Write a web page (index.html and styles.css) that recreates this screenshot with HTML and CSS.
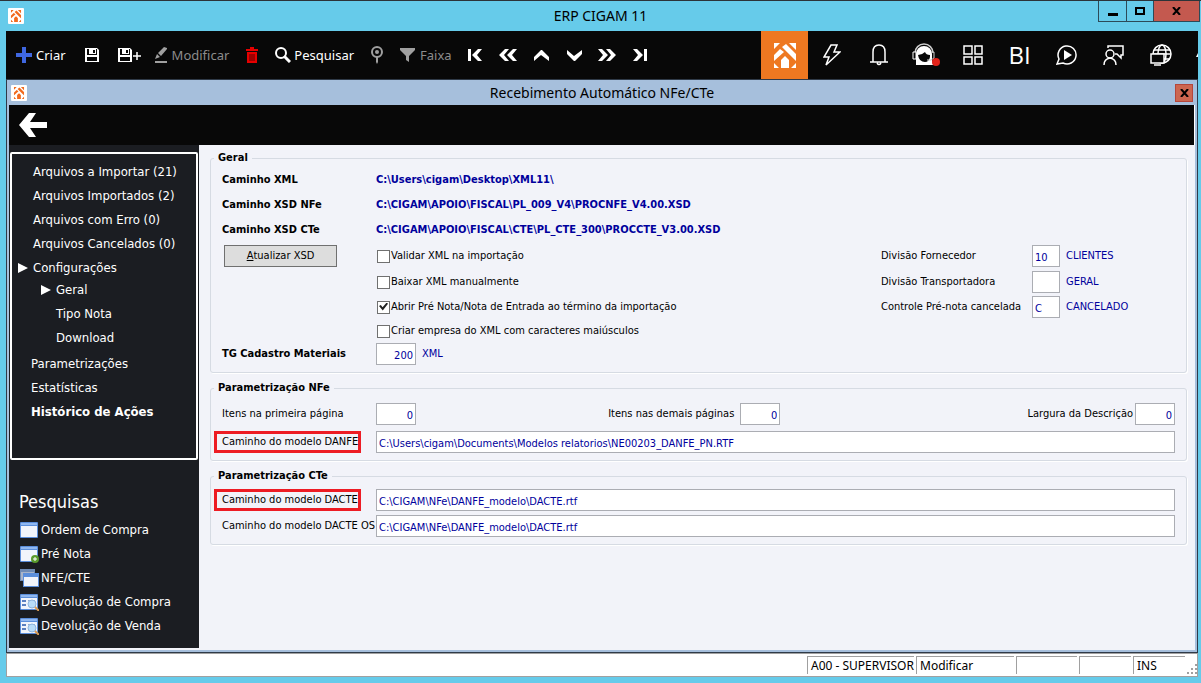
FILE: index.html
```html
<!DOCTYPE html>
<html lang="pt-BR">

<head>
    <meta charset="UTF-8">
    <title>ERP CIGAM 11</title>
    <link rel="stylesheet" href="styles.css">
</head>

<body>
    <svg class="symbols" aria-hidden="true">
        <symbol id="logo" viewBox="0 0 22 25">
            <path d="M0 0h6L0 6zM15 0h7v7zM0 12l6-6 4 3L0 18zM8 4l4-3 10 10v7zM7 25v-8l4-4 4 4v8zM0 25v-5l5 5zM22 25v-5l-5 5z" />
        </symbol>
        <symbol id="disk" viewBox="0 0 14 14">
            <path d="M0 0h12l2 2v12H0z" fill="#fff" />
            <path d="M2 1h2v5h7V1h1v6H2zM2 9h10v4H2zM8 2h2v3H8z" fill="#080808" />
        </symbol>
        <symbol id="window" viewBox="0 0 19 18">
            <rect x="0" y="1" width="18" height="16" rx="1" fill="#5b8edb" />
            <path d="M1 2h16v2H1z" fill="#8fb7f0" />
            <path d="M1 5h16v11H1z" fill="#f1f4fb" />
        </symbol>
        <symbol id="search-window" viewBox="0 0 19 18">
            <use href="#window" width="19" height="18" />
            <path d="M2 7h4v2H2zM2 11h4v2H2z" fill="#5b7fc0" />
            <path d="M8 7h7v1H8z" fill="#8fa8cc" />
            <circle cx="12" cy="11" r="4" fill="#b9dcf8" stroke="#8fb4de" />
            <path d="M15 14l4 4" stroke="#d79a55" stroke-width="2" />
        </symbol>
    </svg>

    <header class="title-bar">
        <svg class="app-icon" viewBox="-6 -4 34 33"><use href="#logo" width="22" height="25" /></svg>
        <h1>ERP CIGAM 11</h1>
        <div class="window-buttons">
            <button type="button" aria-label="Minimizar"><svg width="10" height="10" viewBox="0 0 10 10"><path d="M0 7h10v3H0z" /></svg></button>
            <button type="button" aria-label="Maximizar"><svg width="10" height="8" viewBox="0 0 10 8"><path d="M1 1h8v6H1z" fill="none" stroke="#000" stroke-width="2" /></svg></button>
            <button type="button" class="close" aria-label="Fechar"><svg width="9" height="8" viewBox="0 0 9 8"><path d="M1 0l7 8M8 0L1 8" stroke="#000" stroke-width="2" /></svg></button>
        </div>
    </header>

    <div class="frame">
        <nav class="toolbar">
            <div class="tools">
                <button type="button"><svg width="16" height="16" viewBox="0 0 16 16"><path d="M6 0h4v6h6v4h-6v6H6v-6H0V6h6z" fill="#3f67e0" /></svg>Criar</button>
                <button type="button" class="wide-icon" aria-label="Salvar"><svg width="14" height="14"><use href="#disk" /></svg></button>
                <button type="button" aria-label="Salvar e criar"><svg width="24" height="14" viewBox="0 0 24 14"><use href="#disk" width="14" height="14" /><path d="M19 4v8M15 8h8" stroke="#fff" stroke-width="1.5" /></svg></button>
                <button type="button" class="off"><svg width="14" height="16" viewBox="0 0 14 16"><path d="M1 14h12v2H1zM1 12l2-5 3 3zM4 6l6-6 3 1v1L7 9z" /></svg>Modificar</button>
                <button type="button" class="single-icon" aria-label="Excluir"><svg width="12" height="16" viewBox="0 0 12 16"><path d="M0 2h4V0h4v2h4v2H0zM1 5h10v11H1z" fill="#e60000" /><path d="M4 7v7M6 7v7M8 7v7" stroke="#500" /></svg></button>
                <button type="button" class="search"><svg width="16" height="16" viewBox="0 0 16 16"><circle cx="6" cy="6" r="5" fill="none" stroke="#fff" stroke-width="2" /><path d="M9 9l6 6" stroke="#fff" stroke-width="3" /></svg>Pesquisar</button>
                <button type="button" class="single-icon off" aria-label="Localizar"><svg width="12" height="18" viewBox="0 0 12 18"><circle cx="6" cy="6" r="5" fill="none" stroke="#a0a0a0" stroke-width="2" /><circle cx="6" cy="6" r="2" /><path d="M5 11h2v5l-1 2-1-2z" /></svg></button>
                <button type="button" class="off"><svg width="16" height="14" viewBox="0 0 16 14"><path d="M0 0h15v2L9 8v6l-3-2V8L0 2z" /></svg>Faixa</button>
            </div>
            <div class="record-nav">
                <button type="button" aria-label="Primeiro"><svg width="14" height="12" viewBox="0 0 14 12"><path d="M0 0h3v12H0zM10 0h4L9 6l5 6h-4L4 6z" /></svg></button>
                <button type="button" aria-label="Página anterior"><svg width="18" height="12" viewBox="0 0 18 12"><path d="M6 0h4L5 6l5 6H6L0 6zM14 0h4l-5 6 5 6h-4L8 6z" /></svg></button>
                <button type="button" aria-label="Anterior"><svg width="15" height="11" viewBox="0 0 15 11"><path d="M0 7l7-7h1l7 7v4L7 5l-7 6z" /></svg></button>
                <button type="button" aria-label="Próximo"><svg width="15" height="11" viewBox="0 0 15 11"><path d="M0 4l7 7h1l7-7V0L7 6 0 0z" /></svg></button>
                <button type="button" aria-label="Próxima página"><svg width="18" height="12" viewBox="0 0 18 12"><path d="M0 0h4l6 6-6 6H0l5-6zM8 0h4l6 6-6 6H8l5-6z" /></svg></button>
                <button type="button" aria-label="Último"><svg width="14" height="12" viewBox="0 0 14 12"><path d="M11 0h3v12h-3zM0 0h4l6 6-6 6H0l5-6z" /></svg></button>
            </div>
            <div class="modules">
                <button type="button" class="home" aria-label="CIGAM"><svg width="22" height="25"><use href="#logo" /></svg></button>
                <button type="button" aria-label="Atalhos"><svg class="line" width="18" height="22" viewBox="0 0 18 22"><path d="M8 1h6l-3 7h6L3 21l3-8H1z" /></svg></button>
                <button type="button" aria-label="Avisos"><svg class="line" width="18" height="22" viewBox="0 0 18 22"><path d="M3 18V8q0-7 6-7t6 7v10M0 18h18M7 19q2 3 4 0" /></svg></button>
                <button type="button" aria-label="Atendimento"><svg width="28" height="24" viewBox="0 0 28 24"><path d="M3 10a9 9 0 0 1 18 0" fill="none" stroke="#ccc" stroke-width="1.5" /><path d="M4 11a8 8 0 0 1 16 0v6l1 5H4z" /><path d="M6 12q4 0 7-3 1 3 5 3v2q-1 5-5 5-6 0-7-7z" fill="#080808" /><path d="M1 9h3v7H1z" fill="#080808" stroke="#fff" /><path d="M21 9h1v6l-3 2h-4" fill="none" stroke="#ccc" /><circle cx="24" cy="19" r="4" fill="#e2231a" /></svg></button>
                <button type="button" aria-label="Painéis"><svg class="line" width="20" height="20" viewBox="0 0 20 20"><path d="M1 1h8v8H1zM12 1h7v8h-7zM1 12h8v7H1zM12 12h7v7h-7z" /></svg></button>
                <button type="button" class="bi">BI</button>
                <button type="button" aria-label="Vídeos"><svg class="line" width="22" height="22" viewBox="0 0 22 22"><path d="M1 20l2-5a9 9 0 1 1 4 4z" /><path d="M8 6l8 5-8 5z" fill="#fff" stroke="none" /></svg></button>
                <button type="button" aria-label="Comunidade"><svg class="line" width="21" height="21" viewBox="0 0 21 21"><circle cx="7" cy="9" r="4" /><path d="M1 20q0-6 6-7 6 1 6 7M5 3V1h15v9h-2v3l-4-4h-2" /></svg></button>
                <button type="button" aria-label="Acesso remoto"><svg class="line" width="22" height="22" viewBox="0 0 22 22"><circle cx="12" cy="10" r="9" /><ellipse cx="12" cy="10" rx="4" ry="9" /><path d="M4 6h16M3 10h18M5 15h15" /><path d="M1 10h13v9H1z" fill="#080808" /><path d="M4 21h7" /></svg></button>
                <button type="button" class="more" aria-label="Mais"><svg width="2" height="4" viewBox="0 0 2 4"><path d="M2 0v4H0z" /></svg></button>
            </div>
        </nav>

        <section class="child-window">
            <div class="child-title">
                <svg class="app-icon" viewBox="-6 -4 34 33"><use href="#logo" width="22" height="25" /></svg>
                <h2>Recebimento Automático NFe/CTe</h2>
                <button type="button" class="child-close" aria-label="Fechar"><svg width="9" height="8" viewBox="0 0 9 8"><path d="M1 0l7 8M8 0L1 8" stroke="#000" stroke-width="2" /></svg></button>
            </div>
            <div class="back-bar">
                <button type="button" aria-label="Voltar"><svg width="28" height="24" viewBox="0 0 28 24"><path d="M10 0h7L11 9h17v6H11l6 9h-7L0 12z" fill="#fff" /></svg></button>
            </div>
            <div class="workspace">
                <aside class="sidebar">
                    <ul class="menu">
                        <li><a href="#">Arquivos a Importar (21)</a></li>
                        <li><a href="#">Arquivos Importados (2)</a></li>
                        <li><a href="#">Arquivos com Erro (0)</a></li>
                        <li><a href="#">Arquivos Cancelados (0)</a></li>
                        <li>
                            <a href="#" class="open">Configurações</a>
                            <ul class="submenu">
                                <li><a href="#" class="open">Geral</a></li>
                                <li><a href="#">Tipo Nota</a></li>
                                <li><a href="#">Download</a></li>
                            </ul>
                        </li>
                        <li><a href="#">Parametrizações</a></li>
                        <li><a href="#">Estatísticas</a></li>
                        <li><a href="#" class="current">Histórico de Ações</a></li>
                    </ul>
                    <h3>Pesquisas</h3>
                    <ul class="searches">
                        <li><a href="#"><svg width="19" height="18"><use href="#window" /></svg>Ordem de Compra</a></li>
                        <li><a href="#"><svg width="19" height="18" viewBox="0 0 19 18"><use href="#window" width="19" height="18" /><circle cx="15" cy="14" r="4" fill="#5a9a2c" /><path d="M15 12v4M13 14h4" stroke="#fff" /></svg>Pré Nota</a></li>
                        <li><a href="#"><svg width="19" height="18" viewBox="0 0 19 18"><path d="M0 0h15v12H0z" fill="#6f8bb5" /><path d="M1 3h13v8H1z" fill="#a9b4c8" /><path d="M3 4h16v14H3z" fill="#5b8edb" /><path d="M4 8h14v9H4z" fill="#f1f4fb" /></svg>NFE/CTE</a></li>
                        <li><a href="#"><svg width="19" height="18"><use href="#search-window" /></svg>Devolução de Compra</a></li>
                        <li><a href="#"><svg width="19" height="18"><use href="#search-window" /></svg>Devolução de Venda</a></li>
                    </ul>
                </aside>

                <form class="settings">
                    <fieldset>
                        <legend>Geral</legend>
                        <div class="general">
                            <strong>Caminho XML</strong>
                            <strong class="value path">C:\Users\cigam\Desktop\XML11\</strong>
                            <strong>Caminho XSD NFe</strong>
                            <strong class="value path">C:\CIGAM\APOIO\FISCAL\PL_009_V4\PROCNFE_V4.00.XSD</strong>
                            <strong>Caminho XSD CTe</strong>
                            <strong class="value path">C:\CIGAM\APOIO\FISCAL\CTE\PL_CTE_300\PROCCTE_V3.00.XSD</strong>

                            <button type="button" class="update"><u>A</u>tualizar XSD</button>
                            <label class="check"><input type="checkbox">Validar XML na importação</label>
                            <label for="fornecedor">Divisão Fornecedor</label>
                            <div class="code"><input type="text" id="fornecedor" value="10"><span class="value">CLIENTES</span></div>

                            <label class="check"><input type="checkbox">Baixar XML manualmente</label>
                            <label for="transportadora">Divisão Transportadora</label>
                            <div class="code"><input type="text" id="transportadora"><span class="value">GERAL</span></div>

                            <label class="check"><input type="checkbox" checked>Abrir Pré Nota/Nota de Entrada ao término da importação</label>
                            <label for="controle">Controle Pré-nota cancelada</label>
                            <div class="code"><input type="text" id="controle" value="C"><span class="value">CANCELADO</span></div>

                            <label class="check"><input type="checkbox">Criar empresa do XML com caracteres maiúsculos</label>

                            <label for="tg" class="bold">TG Cadastro Materiais</label>
                            <div class="code"><input type="text" id="tg" class="number" value="200"><span class="value">XML</span></div>
                        </div>
                    </fieldset>

                    <fieldset>
                        <legend>Parametrização NFe</legend>
                        <div class="nfe">
                            <div class="counts">
                                <div class="field"><label for="primeira">Itens na primeira página</label><input type="text" id="primeira" class="number" value="0"></div>
                                <div class="field end"><label for="demais">Itens nas demais páginas</label><input type="text" id="demais" class="number" value="0"></div>
                                <div class="field end last"><label for="largura">Largura da Descrição</label><input type="text" id="largura" class="number" value="0"></div>
                            </div>
                            <div class="field">
                                <label for="danfe"><span class="marked">Caminho do modelo DANFE</span></label>
                                <input type="text" id="danfe" value="C:\Users\cigam\Documents\Modelos relatorios\NE00203_DANFE_PN.RTF">
                            </div>
                        </div>
                    </fieldset>

                    <fieldset>
                        <legend>Parametrização CTe</legend>
                        <div class="cte">
                            <div class="field">
                                <label for="dacte"><span class="marked">Caminho do modelo DACTE</span></label>
                                <input type="text" id="dacte" value="C:\CIGAM\NFe\DANFE_modelo\DACTE.rtf">
                            </div>
                            <div class="field">
                                <label for="dacteos">Caminho do modelo DACTE OS</label>
                                <input type="text" id="dacteos" value="C:\CIGAM\NFe\DANFE_modelo\DACTE.rtf">
                            </div>
                        </div>
                    </fieldset>
                </form>
            </div>
        </section>

        <footer class="status-bar">
            <span class="user">A00 - SUPERVISOR</span>
            <span class="mode">Modificar</span>
            <span class="info"></span>
            <span class="lock"></span>
            <span class="lock">INS</span>
            <svg width="10" height="10" viewBox="0 0 10 10"><path d="M8 0h2v2H8zM4 4h2v2H4zM8 4h2v2H8zM0 8h2v2H0zM4 8h2v2H4zM8 8h2v2H8z" fill="#a0a0a0" /></svg>
        </footer>
    </div>
</body>

</html>
```
FILE: styles.css
```css
* {
    box-sizing: border-box;
}

body {
    display: flex;
    flex-direction: column;
    min-height: 100vh;
    margin: 0;
    border-top: 1px solid #2c3338;
    background-color: #66cbea;
    color: #000;
    font-family: "DejaVu Sans Condensed", "DejaVu Sans", sans-serif;
    font-size: 11px;
    line-height: 14px;
}

h1,
h2,
h3,
ul {
    margin: 0;
    padding: 0;
    font-weight: normal;
    list-style: none;
}

button {
    display: flex;
    align-items: center;
    justify-content: center;
    padding: 0;
    border: none;
    background: none;
    color: inherit;
    font: inherit;
}

a {
    color: inherit;
    text-decoration: none;
}

svg {
    flex: none;
}

.symbols {
    position: absolute;
    width: 0;
    height: 0;
}

.app-icon {
    width: 16px;
    height: 16px;
    border-radius: 1px;
    background-color: #fff;
    fill: #f26a1e;
}

/* janela principal */
.title-bar {
    display: grid;
    grid-template-columns: 1fr auto 1fr;
    align-items: center;
    height: 30px;
    padding: 0 1px;
    font-family: "Noto Sans", sans-serif;
}

.title-bar .app-icon {
    margin-left: 7px;
}

.title-bar h1 {
    font-size: 14px;
    line-height: 20px;
}

.window-buttons {
    display: flex;
    align-self: start;
    justify-self: end;
    border: 1px solid #2c4a58;
    border-top: none;
}

.window-buttons button {
    width: 27px;
    height: 20px;
}

.window-buttons button + button {
    border-left: 1px solid #2c4a58;
}

.window-buttons .close {
    width: 46px;
    background-color: #c4594f;
}

.frame {
    display: flex;
    flex: 1;
    flex-direction: column;
    margin: 0 3px 6px 6px;
}

/* barra de ferramentas */
.toolbar {
    display: flex;
    height: 48px;
    overflow: hidden;
    background-color: #080808;
    color: #fff;
    fill: #fff;
    font-family: "Noto Sans", sans-serif;
    font-size: 13px;
}

.tools {
    display: flex;
    gap: 12px;
    padding-left: 10px;
    margin-right: 7px;
}

.tools button {
    gap: 4px;
}

.tools .wide-icon {
    width: 28px;
}

.tools .single-icon {
    width: 22px;
}

.tools .search {
    gap: 3px;
}

.tools .off {
    color: #8c8c8c;
    fill: #a0a0a0;
}

.record-nav {
    display: flex;
}

.record-nav button {
    width: 33px;
}

.modules {
    display: flex;
    margin-left: auto;
}

.modules button {
    width: 47px;
}

.modules .home {
    background-color: #ee7821;
}

.modules .bi {
    font-family: "Open Sans", sans-serif;
    font-size: 24px;
}

.modules .more {
    justify-content: flex-end;
    width: 14px;
}

.line {
    fill: none;
    stroke: #fff;
    stroke-width: 1.5;
}

/* janela filha */
.child-window {
    display: flex;
    flex: 1;
    flex-direction: column;
    padding: 0 2px 2px;
    border: 1px solid #2f3a48;
    background-color: #a6bfdc;
}

.child-title {
    display: grid;
    grid-template-columns: 1fr auto 1fr;
    align-items: center;
    height: 25px;
    padding: 0 2px;
    font-family: "Noto Sans", sans-serif;
}

.child-title h2 {
    font-size: 14px;
    line-height: 20px;
}

.child-close {
    justify-self: end;
    width: 18px;
    height: 18px;
    border: 1px solid #b5463b;
    background-color: #cc6650;
}

.back-bar {
    display: flex;
    height: 40px;
    padding-left: 10px;
    border-right: 1px solid #fff;
    background-color: #080808;
}

.workspace {
    display: flex;
    flex: 1;
    padding-bottom: 2px;
    background-color: #f2f3f9;
}

.sidebar {
    width: 190px;
    padding: 7px 1px 0;
    background-color: #1b1d22;
    color: #fff;
    font-size: 13px;
}

.menu {
    min-height: 308px;
    padding: 6px 0 0 19px;
    border: 2px solid #fff;
    border-radius: 2px;
}

.menu a,
.searches a {
    display: flex;
    align-items: center;
    height: 24px;
    white-space: nowrap;
}

.menu > li:nth-child(-n+5) > a {
    padding-left: 2px;
}

.menu .open::before {
    width: 10px;
    height: 10px;
    margin: 0 5px 0 -15px;
    background-color: #fff;
    clip-path: polygon(0 0, 100% 50%, 0 100%);
    content: "";
}

.menu .current {
    font-weight: bold;
}

.submenu {
    margin: -2px 0 2px;
    padding-left: 25px;
}

.sidebar h3 {
    margin: 30px 0 4px 9px;
    font-size: 18px;
    line-height: 24px;
}

.searches a {
    gap: 2px;
    padding-left: 10px;
}

/* formulário */
.settings {
    display: flex;
    flex: 1;
    flex-direction: column;
    gap: 8px;
    padding: 6px 8px 0 11px;
}

fieldset {
    min-width: 0;
    margin: 0;
    padding: 0 11px 7px;
    border: 1px solid #d6dbe3;
    border-radius: 3px;
    box-shadow: 1px 1px #fff;
}

legend {
    margin-left: -8px;
    padding: 0 4px;
    font-weight: bold;
}

label,
strong {
    white-space: nowrap;
}

input[type="text"] {
    width: 28px;
    height: 22px;
    margin: 0;
    padding: 2px 2px 0;
    border: 1px solid #abadb3;
    background-color: #fff;
    color: #00009c;
    font: inherit;
}

input.number {
    width: 40px;
    text-align: right;
}

.value {
    color: #00009c;
}

.general {
    display: grid;
    grid-template-columns: 154px 1fr 151px 143px;
    grid-template-rows: 26px 24px 26px 26px 26px 24px 24px 22px;
    align-items: center;
    padding-top: 2px;
}

.general .path {
    grid-column: 2 / -1;
}

.general .bold {
    grid-column: 1;
    font-weight: bold;
}

.update {
    width: 113px;
    height: 22px;
    margin-left: 2px;
    border: 1px solid #707070;
    background-color: #ddd;
}

.check {
    display: flex;
    grid-column: 2;
    align-items: center;
    gap: 1px;
}

.check input {
    width: 13px;
    height: 13px;
    margin: 0 0 0 1px;
    border: 1px solid #707070;
    background-color: #fff;
    appearance: none;
}

.check input:checked::before {
    display: block;
    width: 9px;
    height: 8px;
    margin: 1px;
    background-color: #222;
    clip-path: polygon(0 45%, 20% 30%, 40% 60%, 85% 0, 100% 15%, 42% 100%);
    content: "";
}

.code {
    display: flex;
    align-items: center;
    gap: 6px;
}

.nfe,
.cte {
    display: flex;
    flex-direction: column;
}

.nfe {
    gap: 6px;
    padding-top: 8px;
}

.cte {
    gap: 4px;
    padding-top: 6px;
}

.counts {
    display: grid;
    grid-template-columns: 194px 12fr 13fr;
}

.field {
    display: flex;
    align-items: center;
}

.field label {
    width: 154px;
}

.field > input:not(.number) {
    flex: 1;
}

.field.end {
    gap: 6px;
    justify-content: flex-end;
}

.field.end label {
    width: auto;
}

.field.last {
    gap: 2px;
}

.marked {
    display: inline-block;
    margin-left: -8px;
    padding: 1px 0 1px 5px;
    border: 3px solid #ed1c24;
}

/* barra de status */
.status-bar {
    display: flex;
    align-items: flex-end;
    justify-content: flex-end;
    gap: 2px;
    height: 24px;
    padding: 2px 0;
    border: 1px solid #a0a0a0;
    background-color: #fff;
    font-family: "Noto Sans", sans-serif;
    font-size: 12px;
}

.status-bar span {
    height: 18px;
    padding: 1px 0 0 3px;
    border: 1px solid #a0a0a0;
    border-width: 1px 0 0 1px;
    line-height: 16px;
    white-space: nowrap;
}

.status-bar .user {
    width: 107px;
}

.status-bar .mode {
    width: 98px;
}

.status-bar .info {
    width: 61px;
}

.status-bar .lock {
    width: 52px;
}
```
